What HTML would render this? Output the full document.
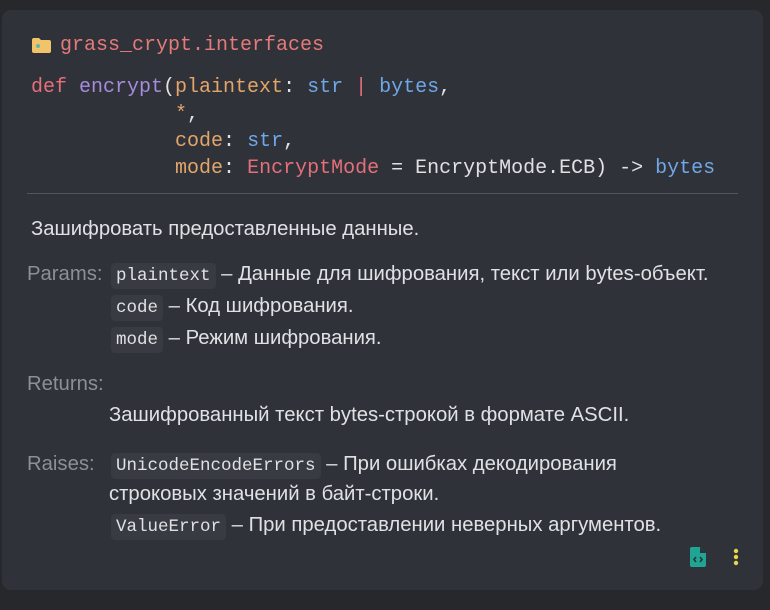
<!DOCTYPE html>
<html><head><meta charset="utf-8"><style>
html,body{margin:0;width:770px;height:610px;background:#26282c;overflow:hidden}
.pop{position:absolute;left:2px;top:10px;width:761px;height:580px;background:#2f3238;border-radius:9px}
.a{position:absolute;white-space:pre;line-height:1}
.m{font-family:"Liberation Mono",monospace;font-size:20px}
.s{font-family:"Liberation Sans","Noto Sans CJK SC",sans-serif;font-size:20.3px;color:#dfe1e5}
.l{color:#8c9096}
.c{font-family:"Liberation Mono",monospace;font-size:17.5px;background:#383b41;border-radius:4px;padding:3px 5px;color:#dfe1e5}
.k{color:#e56f7a}.f{color:#a78bdc}.p{color:#e3a56a}.t{color:#6fa7e8}.w{color:#dfe1e5}
</style></head><body>
<div class="pop"></div>
<svg style="position:absolute;left:32px;top:38px" width="19" height="15"><path d="M0 2Q0 0 2 0H7L9 2H17Q19 2 19 4V13Q19 15 17 15H2Q0 15 0 13Z" fill="#f2c46a"/><circle cx="6" cy="8" r="2" fill="#5fb8a5"/></svg>
<div class="a m" style="left:60px;top:36px;color:#e57a7a">grass_crypt.interfaces</div>
<div class="a m" style="left:31px;top:78px"><span class="k">def </span><span class="f">encrypt</span><span class="w">(</span><span class="p">plaintext</span><span class="w">: </span><span class="t">str</span><span class="k"> | </span><span class="t">bytes</span><span class="w">,</span></div>
<div class="a m" style="left:31px;top:105px"><span class="w">            </span><span class="p">*</span><span class="w">,</span></div>
<div class="a m" style="left:31px;top:132px">            <span class="p">code</span><span class="w">: </span><span class="t">str</span><span class="w">,</span></div>
<div class="a m" style="left:31px;top:159px">            <span class="p">mode</span><span class="w">: </span><span class="k">EncryptMode</span><span class="w"> = EncryptMode.ECB) -&gt; </span><span class="t">bytes</span></div>
<div style="position:absolute;left:27px;top:193px;width:711px;height:1px;background:#51555c"></div>
<div class="a s" style="left:31px;top:219px">Зашифровать предоставленные данные.</div>
<div class="a s l" style="left:27px;top:264px">Params:</div>
<div class="a s" style="left:111px;top:264px"><span class="c">plaintext</span> – Данные для шифрования, текст или bytes-объект.</div>
<div class="a s" style="left:111px;top:296px"><span class="c">code</span> – Код шифрования.</div>
<div class="a s" style="left:111px;top:328px"><span class="c">mode</span> – Режим шифрования.</div>
<div class="a s l" style="left:27px;top:374px">Returns:</div>
<div class="a s" style="left:109px;top:405px">Зашифрованный текст bytes-строкой в формате ASCII.</div>
<div class="a s l" style="left:27px;top:454px">Raises:</div>
<div class="a s" style="left:111px;top:454px"><span class="c">UnicodeEncodeErrors</span> – При ошибках декодирования</div>
<div class="a s" style="left:109px;top:484px">строковых значений в байт-строки.</div>
<div class="a s" style="left:111px;top:515px"><span class="c">ValueError</span> – При предоставлении неверных аргументов.</div>
<svg style="position:absolute;left:690px;top:547px" width="16" height="20"><path d="M0 2Q0 0 2 0H10L16 6V18Q16 20 14 20H2Q0 20 0 18Z" fill="#1fa594"/><path d="M10 0V6H16Z" fill="#2f3238"/><path d="M6 10L4 12.5L6 15M10 10L12 12.5L10 15" stroke="#2f3238" stroke-width="1.6" fill="none"/></svg>
<svg style="position:absolute;left:733px;top:548px" width="6" height="18"><circle cx="3" cy="3" r="2.2" fill="#e8d44d"/><circle cx="3" cy="9" r="2.2" fill="#e8d44d"/><circle cx="3" cy="15" r="2.2" fill="#e8d44d"/></svg>
</body></html>
